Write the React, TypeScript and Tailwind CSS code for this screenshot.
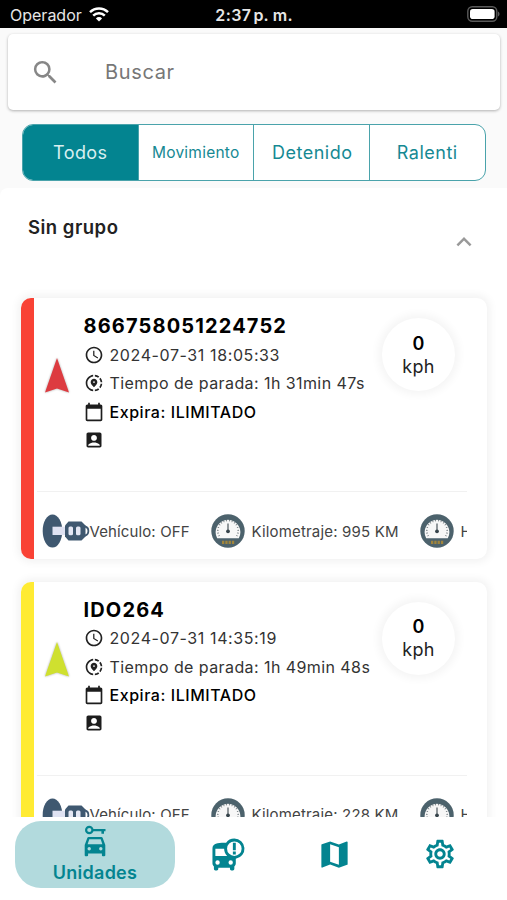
import React, { useState } from 'react';
import {
  MdAccessTime,
  MdAccountBox,
  MdBusAlert,
  MdCalendarToday,
  MdExpandLess,
  MdMap,
  MdOutlineSettings,
  MdSearch,
  MdShareLocation,
} from 'react-icons/md';

interface Unit {
  name: string;
  date: string;
  stopTime: string;
  expires: string;
  mileage: string;
  barClass: string;
  arrowClass: string;
}

const units: Unit[] = [
  {
    name: '866758051224752',
    date: '2024-07-31 18:05:33',
    stopTime: '1h 31min 47s',
    expires: 'ILIMITADO',
    mileage: '995 KM',
    barClass: 'bg-[#f94235]',
    arrowClass: 'fill-[#dd3b40]',
  },
  {
    name: 'IDO264',
    date: '2024-07-31 14:35:19',
    stopTime: '1h 49min 48s',
    expires: 'ILIMITADO',
    mileage: '228 KM',
    barClass: 'bg-[#ffeb33]',
    arrowClass: 'fill-[#cfe02f]',
  },
];

const filters = [
  { label: 'Todos', textClass: 'text-[18px] tracking-[0.4px]' },
  { label: 'Movimiento', textClass: 'text-[15.5px] tracking-[0.25px]' },
  { label: 'Detenido', textClass: 'text-[18px] tracking-[0.5px] pl-[2px]' },
  { label: 'Ralenti', textClass: 'text-[18px] tracking-[0.5px]' },
];

const StatusBar = () => (
  <header className="grid h-7 shrink-0 grid-cols-3 items-center bg-black text-[16px] leading-none text-[#e6e6e6]">
    <div className="flex items-center gap-[7px] pl-[10px] pt-[2px]">
      <span>Operador</span>
      <svg width="20" height="15" viewBox="0 0 20 15" fill="none" stroke="white" className="-mt-px">
        <path d="M1 5.2a12.8 12.8 0 0 1 18 0" strokeWidth="2.5" />
        <path d="M4.2 8.6a8.2 8.2 0 0 1 11.6 0" strokeWidth="2.5" />
        <path d="M10 14.6 6.9 11.4a4.4 4.4 0 0 1 6.2 0z" fill="white" stroke="none" />
      </svg>
    </div>
    <div className="pt-[2px] pl-[1px] text-center font-semibold whitespace-nowrap">
      <span className="tracking-[0.4px]">2:37</span>
      <span className="ml-[2px] tracking-[0.2px]">p. m.</span>
    </div>
    <div className="flex justify-end pr-[7px]">
      <svg width="33" height="16" viewBox="0 0 33 16">
        <rect x="0.8" y="0.8" width="29" height="14.4" rx="4.5" fill="none" stroke="#5a5a5a" strokeWidth="1.4" />
        <rect x="3" y="3" width="24.6" height="10" rx="2.8" fill="white" />
        <path d="M31 5.5c2 .8 2 4.2 0 5z" fill="#5a5a5a" />
      </svg>
    </div>
  </header>
);

const HeadingArrow = ({ className }: { className: string }) => (
  <svg width="30" height="42" viewBox="0 0 30 42" className="drop-shadow-[0_0_1px_rgba(0,0,0,0.35)]">
    <path d="M15 3 27 37.500 15 33.500 3 37.500z" className={className} />
  </svg>
);

const KeyIcon = () => (
  <svg width="48" height="34" viewBox="0 0 48 34" className="shrink-0">
    <ellipse cx="10.5" cy="17" rx="9.8" ry="16.5" fill="#3f5870" />
    <path d="M10.5 12.7h12.500v8.300H10.500z" fill="#dfe2f2" />
    <path d="M26.500 7.500h13l4 4v11l-4 4h-13l-3.500-4v-11z" fill="#3f5870" />
    <path d="M43 12.500c4.500 1 4.500 8 0 9" fill="none" stroke="#3f5870" strokeWidth="1.800" />
    <rect x="26.500" y="12.500" width="4.500" height="8.700" rx="1.500" fill="#e4e7f4" />
    <rect x="34" y="12.500" width="4.500" height="8.700" rx="1.500" fill="#e4e7f4" />
  </svg>
);

const GaugeIcon = () => (
  <svg width="34" height="34" viewBox="0 0 34 34" className="shrink-0">
    <circle cx="17" cy="17" r="16.700" fill="#4c626c" />
    <path d="M6.200 24.300a12.400 12.400 0 1 1 21.600 0z" fill="#f7f7f7" />
    <path
      d="M8.300 22a10.200 10.200 0 1 1 17.400 0"
      fill="none"
      stroke="#6b7479"
      strokeWidth="1.600"
      strokeDasharray="0.8 2"
    />
    <path d="M17 9.500v7" stroke="#4c565c" strokeWidth="1.200" />
    <circle cx="17" cy="17.300" r="1.900" fill="#35434a" />
    <path d="M11 28.300h13" stroke="#a1853c" strokeWidth="3.200" strokeDasharray="2.300 1" />
  </svg>
);

const CarKeyIcon = () => (
  <svg width="22" height="32" viewBox="0 0 22 32" fill="currentColor">
    <circle cx="5.300" cy="5" r="3.200" fill="none" stroke="currentColor" strokeWidth="2.200" />
    <path d="M8.500 4h13v2.200h-1.500v2.600h-2.600V6.200H8.500z" />
    <path
      fillRule="evenodd"
      d="M4.700 12h12.600c.7 0 1.200.4 1.400 1l2.600 7v10.300c0 .5-.4.900-.9.900h-1.600c-.5 0-.9-.4-.9-.9V28.500H4.100v1.800c0 .5-.4.900-.9.900H1.600c-.5 0-.9-.4-.9-.9V20l2.600-7c.2-.6.700-1 1.400-1zM5.300 14.200 3.600 19.300h14.800l-1.700-5.100zM5.200 22a1.700 1.700 0 1 0 0 3.400 1.700 1.700 0 0 0 0-3.400zM16.800 22a1.700 1.700 0 1 0 0 3.400 1.700 1.700 0 0 0 0-3.400z"
    />
  </svg>
);

const UnitCard = ({ unit }: { unit: Unit }) => (
  <article className="flex h-[261px] shrink-0 overflow-hidden rounded-[10px] bg-white shadow-[0_0_8px_3px_rgba(0,0,0,0.055)]">
    <div className={`w-[12.5px] shrink-0 ${unit.barClass}`} />
    <div className="flex min-w-0 grow flex-col pr-5">
      <div className="flex h-[193px] shrink-0">
        <div className="flex w-[50px] shrink-0 justify-center pt-[57px] pr-[3px]">
          <HeadingArrow className={unit.arrowClass} />
        </div>
        <div className="pt-[14px] whitespace-nowrap text-[#1d1d1d]">
          <h2 className="flex h-7 items-center text-[20px] leading-none font-bold tracking-[1.15px] text-black">
            {unit.name}
          </h2>
          <div className="flex h-[29px] items-center gap-[6px] text-[#333]">
            <MdAccessTime size={20} className="shrink-0 text-[#222]" />
            <span className="text-[16px] tracking-[0.6px]">{unit.date}</span>
          </div>
          <div className="flex h-7 items-center gap-[6px] text-[#333]">
            <MdShareLocation size={20} className="shrink-0 text-[#222]" />
            <span className="text-[16px] tracking-[0.42px]">Tiempo de parada: {unit.stopTime}</span>
          </div>
          <div className="flex h-[29px] items-center gap-[6px]">
            <MdCalendarToday size={20} className="shrink-0" />
            <span className="text-[16px] font-medium tracking-[0.55px] text-black">Expira: {unit.expires}</span>
          </div>
          <div className="flex h-[27px] items-center">
            <MdAccountBox size={20} />
          </div>
        </div>
        <div className="mt-[20px] mr-[12px] ml-auto flex h-[73px] w-[73px] shrink-0 flex-col items-center justify-center rounded-full bg-white text-[18px] leading-[23px] shadow-[0_0_8px_4px_rgba(0,0,0,0.045)]">
          <span className="font-semibold text-black">0</span>
          <span className="tracking-[0.4px] text-[#222]">kph</span>
        </div>
      </div>
      <div className="ml-[3px] flex grow items-center overflow-hidden border-t border-[#f1f1f1] pt-[11px] text-[15px] whitespace-nowrap text-[#444]">
        <div className="ml-[5px] flex items-center">
          <KeyIcon />
          <span className="w-[121px] pt-[2px] tracking-[0.12px]">Vehículo: OFF</span>
        </div>
        <div className="flex items-center gap-[7px]">
          <GaugeIcon />
          <span className="w-[168px] shrink-0 pt-[2px] tracking-[0.17px]">Kilometraje: {unit.mileage}</span>
        </div>
        <div className="flex items-center gap-[7px]">
          <GaugeIcon />
          <span className="pt-[2px]">H</span>
        </div>
      </div>
    </div>
  </article>
);

const BottomNav = () => (
  <nav className="flex h-[83px] shrink-0 items-start bg-white text-[#038490]">
    <button className="mt-1 ml-[15px] flex h-[67px] w-[160px] flex-col items-center rounded-[26px] bg-[#b2dadd] pt-[4px]">
      <CarKeyIcon />
      <span className="mt-[3px] text-[18px] leading-[26px] font-semibold tracking-[0.25px]">Unidades</span>
    </button>
    <button className="mt-5 ml-[36px]">
      <MdBusAlert size={35} />
    </button>
    <button className="mt-5 ml-[71px]">
      <MdMap size={35} />
    </button>
    <button className="mt-5 ml-[71px]">
      <MdOutlineSettings size={34} />
    </button>
  </nav>
);

const App: React.FC = () => {
  const [filter, setFilter] = useState('Todos');

  return (
    <div className="flex h-[900px] w-[507px] flex-col overflow-hidden bg-[#fafafa] font-['Inter','Liberation_Sans',sans-serif]">
      <StatusBar />

      <div className="ml-2 mr-[7px] mt-[6px] flex h-[76px] shrink-0 items-center rounded-[5px] bg-white pl-[22px] shadow-[0_1px_3px_rgba(0,0,0,0.3)]">
        <MdSearch size={31} className="text-[#878787]" />
        <span className="ml-11 text-[20px] tracking-[0.65px] text-[#777]">Buscar</span>
      </div>

      <div className="mt-[14px] mr-[21px] ml-[22px] grid h-[57px] shrink-0 grid-cols-4 divide-x divide-[#4aa3ab] overflow-hidden rounded-[11px] border border-[#4aa3ab] bg-white">
        {filters.map(({ label, textClass }) => (
          <button
            key={label}
            onClick={() => setFilter(label)}
            className={`${textClass} ${filter === label ? 'bg-[#038490] text-[#d9eff0]' : 'text-[#168993]'}`}
          >
            {label}
          </button>
        ))}
      </div>

      <main className="mt-[7px] flex min-h-0 grow flex-col overflow-hidden rounded-tl-[8px] bg-white">
        <div className="flex h-[110px] shrink-0 items-start justify-between pr-[28px] pl-[28px]">
          <h1 className="mt-[26px] text-[18.5px] font-semibold tracking-[0.5px] text-[#222]">Sin grupo</h1>
          <MdExpandLess size={30} className="mt-[39px] text-[#999]" />
        </div>
        <div className="flex flex-col gap-[22.5px] pr-5 pl-[21px]">
          {units.map((unit) => (
            <UnitCard key={unit.name} unit={unit} />
          ))}
        </div>
      </main>

      <BottomNav />
    </div>
  );
};

export default App;
